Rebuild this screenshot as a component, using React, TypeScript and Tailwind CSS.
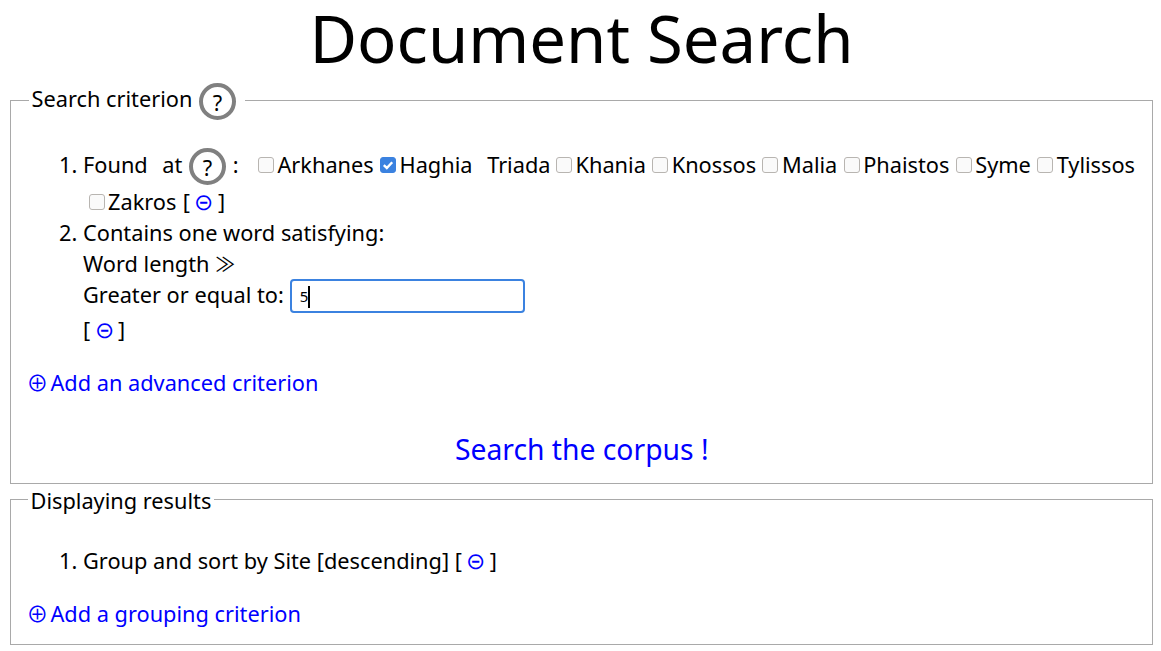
const sites = ['Arkhanes', 'Haghia', 'Khania', 'Knossos', 'Malia', 'Phaistos', 'Syme', 'Tylissos', 'Zakros'];

function Help() {
  return (
    <span className="inline-flex w-[37px] h-[37px] -my-1 mx-[1px] rounded-full border-4 border-[#808080] items-center justify-center align-middle pt-[3px] text-[21.76px] leading-none">
      ?
    </span>
  );
}

function Remove() {
  return (
    <span>
      [ <a className="text-[#0000ff] text-[23px] leading-none -mx-[1.2px] cursor-pointer">⊝</a> ]
    </span>
  );
}

function AddLink({ label }: { label: string }) {
  return (
    <a className="block mt-[22px] text-[#0000ff] cursor-pointer">
      <span className="-ml-[1px] -mr-[3.5px]">⊕</span> {label}
    </a>
  );
}

function Site({ name }: { name: string }) {
  const checked = name === 'Haghia';
  return (
    <label className="whitespace-nowrap">
      <span className="relative inline-block w-4 h-4 ml-[5.5px] mr-[3.5px] align-baseline">
        <input
          type="checkbox"
          defaultChecked={checked}
          className="block appearance-none w-4 h-4 rounded-[3px] border border-[#b8b5b1] bg-[#fafafa] checked:bg-[#3b82e0] checked:border-[#3b82e0]"
        />
        {checked && (
          <svg viewBox="0 0 16 16" className="absolute inset-0 w-4 h-4 pointer-events-none">
            <path d="M3.8 8.2 L6.8 11 L12.2 5.2" fill="none" stroke="white" strokeWidth="2.4" />
          </svg>
        )}
      </span>
      {checked ? <span className="[word-spacing:9px]">Haghia Triada</span> : <span className="mr-[0.8px]">{name}</span>}
    </label>
  );
}

export default function App() {
  return (
    <div className="font-['Noto_Sans','Noto_Sans_CJK_SC',sans-serif] text-[21.76px] leading-[31px] text-black bg-white min-h-[651px] pl-[10px] pr-2">
      <h1 className="text-center text-[65.28px] leading-[76px] pb-1 font-normal">Document Search</h1>

      <fieldset className="border border-[#a9a9a9] pl-[16.5px] pr-[10px] pb-[14px] mt-[3px]">
        <legend className="ml-[1px] px-[3px] pr-[8px] pb-[2px]">
          Search criterion <Help />
        </legend>
        <ol className="list-decimal pl-[55.5px] mt-[28px]">
          <li className="leading-[37px]">
            <span className="[word-spacing:9px]">Found at</span> <Help /> <span className="mr-[2.6px]">: &nbsp;</span>
            {sites.map((s) => (
              <Site key={s} name={s} />
            ))}
            {' '}
            <Remove />
          </li>
          <li className="-mt-[3px]">
            <div>Contains one word satisfying:</div>
            <div>
              Word length <span className="text-[20px] leading-none">≫</span>
            </div>
            <div className="flex items-start">
              Greater or equal to:
              <span className="relative ml-[6px]">
                <input
                  defaultValue="5"
                  className="block w-[235px] h-[34px] border-2 border-[#3b82e0] rounded-[4px] pl-2 text-[15px] outline-none"
                />
                <span className="absolute left-[18px] top-[7px] w-[2px] h-[22px] bg-black" />
              </span>
            </div>
            <div className="mt-[1px]">
              <Remove />
            </div>
          </li>
        </ol>
        <AddLink label="Add an advanced criterion" />
        <a className="block mt-[31px] pr-[6px] text-center text-[#0000ff] text-[28.29px] leading-[40px] cursor-pointer">Search the corpus !</a>
      </fieldset>

      <fieldset className="border border-[#a9a9a9] pl-[16.5px] pr-[10px] pb-[15px] mt-[2px]">
        <legend className="px-[3px] pr-[3px] pt-[3px] leading-[24px]">Displaying results</legend>
        <ol className="list-decimal pl-[55.5px] mt-[32px]">
          <li>
            Group and sort by Site [descending] <Remove />
          </li>
        </ol>
        <AddLink label="Add a grouping criterion" />
      </fieldset>
    </div>
  );
}
